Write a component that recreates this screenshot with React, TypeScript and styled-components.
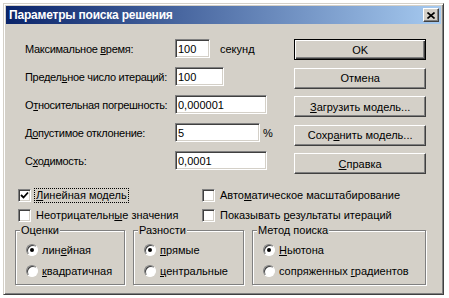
import { FC, ReactNode } from "react";
import styled, { createGlobalStyle } from "styled-components";

const GlobalStyle = createGlobalStyle`
  body {
    margin: 0;
    background: #fff;
    font-family: "Liberation Sans", Arial, sans-serif;
    font-size: 11px;
    color: #000;
  }
`;

const fields = [
    { label: <>Максимальное <u>в</u>ремя:</>, value: "100", width: 35, unit: "секунд" },
    { label: <>Предел<u>ь</u>ное число итераций:</>, value: "100", width: 49 },
    { label: <>О<u>т</u>носительная погрешность:</>, value: "0,000001", width: 92 },
    { label: <>Д<u>о</u>пустимое отклонение:</>, value: "5", width: 85, unit: "%" },
    { label: <>С<u>х</u>одимость:</>, value: "0,0001", width: 92 },
];

const buttons: { text: ReactNode; def?: boolean }[] = [
    { text: "OK", def: true },
    { text: "Отмена" },
    { text: <><u>З</u>агрузить модель...</> },
    { text: <>Сохр<u>а</u>нить модель...</> },
    { text: <><u>С</u>правка</> },
];

const Check: FC<{ checked?: boolean; focus?: boolean; children: ReactNode }> = ({ checked, focus, children }) => (
    <CheckRow>
        <CheckBox>
            {checked && (
                <svg width="9" height="9" viewBox="0 0 9 9">
                    <polyline points="1,4 3.5,6.5 8,1.5" fill="none" stroke="#000" strokeWidth="1.8" />
                </svg>
            )}
        </CheckBox>
        <CheckText $focus={focus}>{children}</CheckText>
    </CheckRow>
);

const Radio: FC<{ checked?: boolean; children: ReactNode }> = ({ checked, children }) => (
    <RadioRow>
        <RadioCircle>{checked && <RadioDot />}</RadioCircle>
        <span>{children}</span>
    </RadioRow>
);

const App: FC = () => {
    return (
        <>
            <GlobalStyle />
            <Window>
                <TitleBar>
                    <span>Параметры поиска решения</span>
                    <CloseButton>
                        <svg width="8" height="7" viewBox="0 0 8 7">
                            <path d="M0.5 0.5 L7.5 6.5 M7.5 0.5 L0.5 6.5" stroke="#000" strokeWidth="1.6" />
                        </svg>
                    </CloseButton>
                </TitleBar>
                <Content>
                    <TopSection>
                        <Form>
                            {fields.map((f, i) => (
                                <FieldRow key={i}>
                                    <Label>{f.label}</Label>
                                    <Input $width={f.width} value={f.value} readOnly />
                                    {f.unit && <Unit $wide={f.unit !== "%"}>{f.unit}</Unit>}
                                </FieldRow>
                            ))}
                        </Form>
                        <Buttons>
                            {buttons.map((b, i) => (
                                <Button key={i} $default={b.def}>{b.text}</Button>
                            ))}
                        </Buttons>
                    </TopSection>
                    <Checks>
                        <Check checked focus><u>Л</u>инейная модель</Check>
                        <Check>Авто<u>м</u>атическое масштабирование</Check>
                        <Check>Неотрицательн<u>ы</u>е значения</Check>
                        <Check>Показывать <u>р</u>езультаты итераций</Check>
                    </Checks>
                    <Groups>
                        <Group $width={110}>
                            <Legend>Оценки</Legend>
                            <Radio checked>лин<u>е</u>йная</Radio>
                            <Radio><u>к</u>вадратичная</Radio>
                        </Group>
                        <Group $width={111}>
                            <Legend>Разности</Legend>
                            <Radio checked><u>п</u>рямые</Radio>
                            <Radio><u>ц</u>ентральные</Radio>
                        </Group>
                        <Group $width={174}>
                            <Legend>Метод поиска</Legend>
                            <Radio checked><u>Н</u>ьютона</Radio>
                            <Radio>сопряженных <u>г</u>радиентов</Radio>
                        </Group>
                    </Groups>
                </Content>
            </Window>
        </>
    );
};

const Window = styled.div`
  margin: 3px 0 0 3px;
  width: 441px;
  height: 292px;
  box-sizing: border-box;
  background: #d4d0c8;
  border: 1px solid;
  border-color: #d4d0c8 #404040 #404040 #d4d0c8;
  box-shadow: inset 1px 1px #fff, inset -1px -1px #808080;
  padding: 2px;
  display: flex;
  flex-direction: column;
`;

const TitleBar = styled.div`
  height: 18px;
  display: flex;
  align-items: center;
  justify-content: space-between;
  padding: 0 2px 0 3px;
  background: linear-gradient(to right, #0a246a, #a6caf0);
  color: #fff;
  font-weight: bold;
  font-size: 12px;
  letter-spacing: -0.2px;
`;

const CloseButton = styled.div`
  width: 16px;
  height: 14px;
  box-sizing: border-box;
  background: #d4d0c8;
  border: 1px solid;
  border-color: #fff #404040 #404040 #fff;
  box-shadow: inset -1px -1px #808080;
  display: flex;
  align-items: center;
  justify-content: center;
`;

const Content = styled.div`
  padding: 15px 15px 0 9px;
  display: flex;
  flex-direction: column;
`;

const TopSection = styled.div`
  display: flex;
`;

const Form = styled.div`
  margin-left: 10px;
  width: 270px;
  display: flex;
  flex-direction: column;
  gap: 9px;
`;

const FieldRow = styled.div`
  height: 19px;
  display: flex;
  align-items: center;
`;

const Label = styled.span`
  width: 150px;
  flex-shrink: 0;
  white-space: nowrap;
  letter-spacing: -0.3px;
`;

const Input = styled.input<{ $width: number }>`
  width: ${p => p.$width}px;
  height: 19px;
  box-sizing: border-box;
  margin: 0;
  padding: 0 2px;
  border: 1px solid;
  border-color: #808080 #fff #fff #808080;
  box-shadow: inset 1px 1px #404040, inset -1px -1px #d4d0c8;
  background: #fff;
  font-family: inherit;
  font-size: 11px;
  outline: none;
`;

const Unit = styled.span<{ $wide?: boolean }>`
  margin-left: ${p => (p.$wide ? 10 : 3)}px;
`;

const Buttons = styled.div`
  width: 132px;
  display: flex;
  flex-direction: column;
  gap: 7.5px;
`;

const Button = styled.div<{ $default?: boolean }>`
  height: 21px;
  box-sizing: border-box;
  display: flex;
  align-items: center;
  justify-content: center;
  background: #d4d0c8;
  border: 1px solid;
  border-color: ${p => (p.$default ? "#000" : "#fff #404040 #404040 #fff")};
  box-shadow: ${p =>
      p.$default
          ? "inset 1px 1px #fff, inset -1px -1px #404040, inset -2px -2px #808080"
          : "inset -1px -1px #808080"};
`;

const Checks = styled.div`
  margin: 11px 0 0 3px;
  display: grid;
  grid-template-columns: 184px 1fr;
  grid-auto-rows: 20px;
`;

const CheckRow = styled.div`
  display: flex;
  align-items: center;
  gap: 3px;
`;

const CheckBox = styled.div`
  width: 13px;
  height: 13px;
  box-sizing: border-box;
  background: #fff;
  border: 1px solid;
  border-color: #808080 #fff #fff #808080;
  box-shadow: inset 1px 1px #404040, inset -1px -1px #d4d0c8;
  display: flex;
  align-items: center;
  justify-content: center;
`;

const CheckText = styled.span<{ $focus?: boolean }>`
  padding: 0 1px;
  line-height: 13px;
  border: 1px dotted ${p => (p.$focus ? "#000" : "transparent")};
`;

const Groups = styled.div`
  margin-top: -1px;
  display: flex;
  gap: 8px;
`;

const Group = styled.fieldset<{ $width: number }>`
  width: ${p => p.$width}px;
  box-sizing: border-box;
  margin: 0;
  padding: 2px 0 3px 0;
  border: 1px solid #808080;
  box-shadow: inset 1px 1px #fff, 1px 1px #fff;
  min-width: 0;
`;

const Legend = styled.legend`
  margin-left: 4px;
  padding: 0 1px;
  line-height: 13px;
  background: #d4d0c8;
`;

const RadioRow = styled.div`
  height: 21px;
  margin-left: 10px;
  display: flex;
  align-items: center;
  gap: 4px;
`;

const RadioCircle = styled.div`
  width: 12px;
  height: 12px;
  box-sizing: border-box;
  border-radius: 50%;
  background: #fff;
  border: 1px solid;
  border-color: #808080 #fff #fff #808080;
  box-shadow: inset 1px 1px #404040;
  display: flex;
  align-items: center;
  justify-content: center;
`;

const RadioDot = styled.div`
  width: 4px;
  height: 4px;
  border-radius: 50%;
  background: #000;
`;

export default App;
